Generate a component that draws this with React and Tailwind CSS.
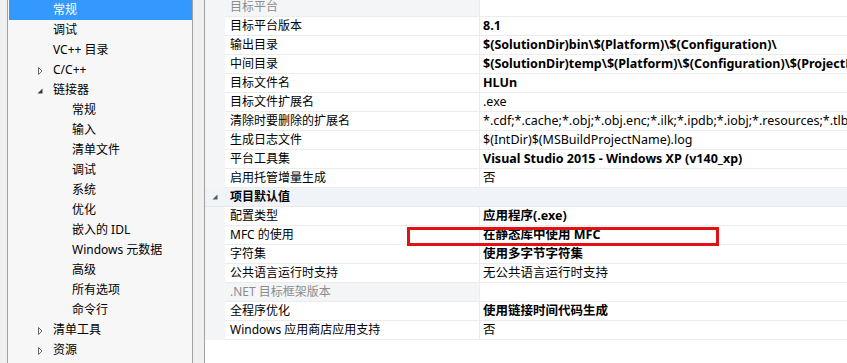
import React from 'react';

const tree = [
  { label: '常规', level: 0, selected: true },
  { label: '调试', level: 0 },
  { label: 'VC++ 目录', level: 0 },
  { label: 'C/C++', level: 0, arrow: 'closed' },
  { label: '链接器', level: 0, arrow: 'open' },
  { label: '常规', level: 1 },
  { label: '输入', level: 1 },
  { label: '清单文件', level: 1 },
  { label: '调试', level: 1 },
  { label: '系统', level: 1 },
  { label: '优化', level: 1 },
  { label: '嵌入的 IDL', level: 1 },
  { label: 'Windows 元数据', level: 1 },
  { label: '高级', level: 1 },
  { label: '所有选项', level: 1 },
  { label: '命令行', level: 1 },
  { label: '清单工具', level: 0, arrow: 'closed' },
  { label: '资源', level: 0, arrow: 'closed' },
];

const rows = [
  { name: '目标平台', value: '', readonly: true },
  { name: '目标平台版本', value: '8.1', bold: true },
  { name: '输出目录', value: '$(SolutionDir)bin\\$(Platform)\\$(Configuration)\\', bold: true },
  { name: '中间目录', value: '$(SolutionDir)temp\\$(Platform)\\$(Configuration)\\$(ProjectName)\\', bold: true },
  { name: '目标文件名', value: 'HLUn', bold: true },
  { name: '目标文件扩展名', value: '.exe' },
  { name: '清除时要删除的扩展名', value: '*.cdf;*.cache;*.obj;*.obj.enc;*.ilk;*.ipdb;*.iobj;*.resources;*.tlb;*.tli;*.tlh;*.tmp' },
  { name: '生成日志文件', value: '$(IntDir)$(MSBuildProjectName).log' },
  { name: '平台工具集', value: 'Visual Studio 2015 - Windows XP (v140_xp)', bold: true },
  { name: '启用托管增量生成', value: '否' },
  { category: '项目默认值' },
  { name: '配置类型', value: '应用程序(.exe)', bold: true },
  { name: 'MFC 的使用', value: '在静态库中使用 MFC', bold: true, marked: true },
  { name: '字符集', value: '使用多字节字符集', bold: true },
  { name: '公共语言运行时支持', value: '无公共语言运行时支持' },
  { name: '.NET 目标框架版本', value: '', readonly: true },
  { name: '全程序优化', value: '使用链接时间代码生成', bold: true },
  { name: 'Windows 应用商店应用支持', value: '否' },
];

function Arrow({ kind }) {
  if (kind === 'open') {
    return (
      <svg width="8" height="8" viewBox="0 0 8 8">
        <path d="M6.5 1.5 L6.5 6.5 L1.5 6.5 Z" fill="#3c3c3c" />
      </svg>
    );
  }
  return (
    <svg width="8" height="10" viewBox="0 0 8 10">
      <path d="M2.5 1.5 L6 5 L2.5 8.5 Z" fill="none" stroke="#6a6a6a" strokeWidth="1" />
    </svg>
  );
}

export default function App() {
  return (
    <div className="w-[847px] h-[363px] overflow-hidden flex bg-[#f0f0f0] text-[12px] text-black font-['Noto_Sans','Noto_Sans_CJK_SC',sans-serif] leading-none">
      <div className="pl-[7px] flex">
        <div className="w-[186px] h-full bg-[#f7f7f7] border-x border-[#a0a0a0] pl-px">
          {tree.map((t, i) => (
            <div key={i}
              className={`h-5 flex items-center ${t.selected ? 'bg-[#3399ff] text-white' : ''}`}>
              <div className="w-[36px] shrink-0 flex justify-end pr-px pt-px">
                {t.arrow && <Arrow kind={t.arrow} />}
              </div>
              <span className={t.level === 1 ? 'pl-[27px]' : 'pl-[8px]'}>{t.label}</span>
            </div>
          ))}
        </div>
      </div>
      <div className="w-[11px] shrink-0" />
      <div className="flex-1 border-l border-[#a0a0a0] bg-white overflow-hidden">
        <div className="-mt-[2px] relative">
          {rows.map((r, i) =>
            r.category ? (
              <div key={i} className="h-[19px] flex items-center bg-[#f0f3f7] border-b border-[#e8e8e8] font-bold">
                <div className="w-5 shrink-0 flex justify-center">
                  <svg width="8" height="8" viewBox="0 0 8 8">
                    <path d="M6.5 1.5 L6.5 6.5 L1.5 6.5 Z" fill="#595959" />
                  </svg>
                </div>
                <span className="pl-[5px]">{r.category}</span>
              </div>
            ) : (
              <div key={i} className="h-[19px] flex bg-[#f4f5f7]">
                <div className="w-5 shrink-0" />
                <div className={`w-[255px] shrink-0 flex items-center pl-[5px] border-b border-r border-[#ececec] ${r.readonly ? 'bg-[#f4f5f7] text-[#8c8c8c]' : 'bg-white'}`}>
                  {r.name}
                </div>
                <div className={`flex-1 flex items-center pl-[3px] text-[12.5px] border-b border-[#ececec] bg-white whitespace-nowrap overflow-hidden ${r.bold ? 'font-bold' : ''}`}>
                  {r.value}
                </div>
              </div>
            )
          )}
          <div className="absolute left-[202px] top-[229px] w-[312px] h-[19px] border-[3px] border-[#e31212]" />
        </div>
      </div>
    </div>
  );
}
